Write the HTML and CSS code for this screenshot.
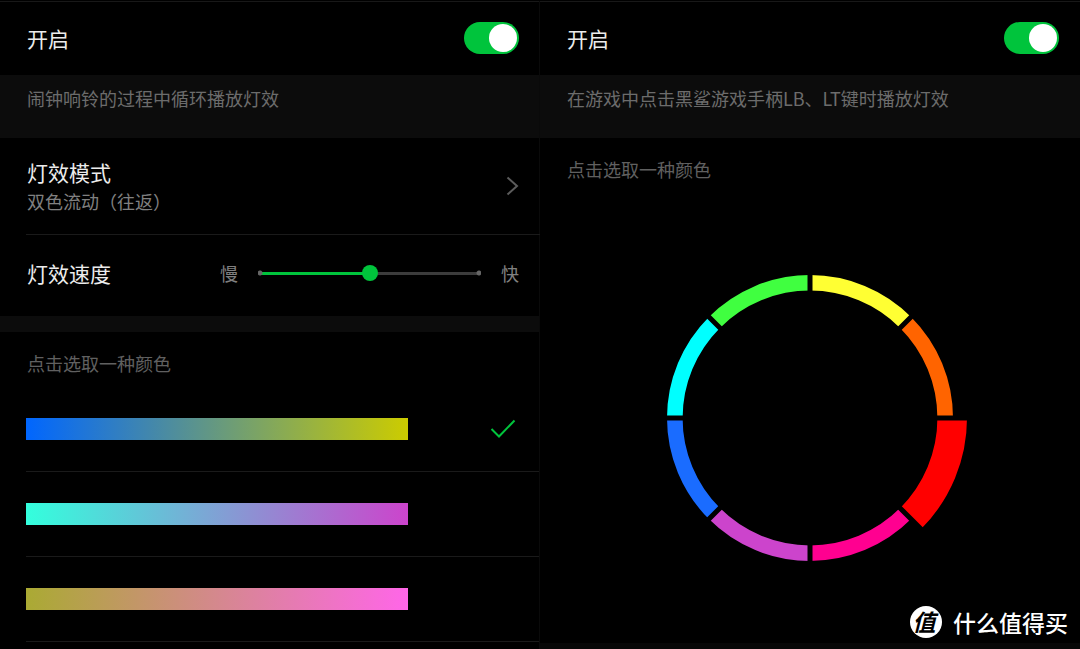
FILE: index.html
```html
<!DOCTYPE html>
<html lang="zh-CN">
<head>
<meta charset="utf-8">
<meta name="viewport" content="width=device-width, initial-scale=1">
<title>灯效设置</title>
<link rel="stylesheet" href="styles.css">
</head>
<body>
<main class="panes">
  <section class="pane">
    <label class="row power">
      <span class="title">开启</span>
      <input class="switch" type="checkbox" role="switch" checked>
    </label>
    <p class="note">闹钟响铃的过程中循环播放灯效</p>
    <button class="row mode" type="button">
      <span class="mode-text">
        <span class="title">灯效模式</span>
        <span class="sub">双色流动（往返）</span>
      </span>
      <svg class="chevron" viewBox="0 0 13 20" aria-hidden="true"><path d="M1.5 1.5 L11 10 L1.5 18.5"/></svg>
    </button>
    <div class="row speed">
      <label class="title speed-label" for="speed">灯效速度</label>
      <span class="end">慢</span>
      <input class="slider" id="speed" type="range" min="0" max="100" value="50">
      <span class="end">快</span>
    </div>
    <fieldset class="colors">
      <legend class="hint">点击选取一种颜色</legend>
      <label class="color">
        <input class="pick" type="radio" name="color" aria-label="蓝黄" checked>
        <span class="swatch blue-yellow"></span>
        <svg class="check" viewBox="0 0 26 20" aria-hidden="true"><path d="M1.5 10 L9 17.5 L24.5 1.5"/></svg>
      </label>
      <label class="color">
        <input class="pick" type="radio" name="color" aria-label="青紫">
        <span class="swatch cyan-purple"></span>
        <svg class="check" viewBox="0 0 26 20" aria-hidden="true"><path d="M1.5 10 L9 17.5 L24.5 1.5"/></svg>
      </label>
      <label class="color">
        <input class="pick" type="radio" name="color" aria-label="橄榄粉">
        <span class="swatch olive-pink"></span>
        <svg class="check" viewBox="0 0 26 20" aria-hidden="true"><path d="M1.5 10 L9 17.5 L24.5 1.5"/></svg>
      </label>
    </fieldset>
  </section>

  <section class="pane">
    <label class="row power">
      <span class="title">开启</span>
      <input class="switch" type="checkbox" role="switch" checked>
    </label>
    <p class="note">在游戏中点击黑鲨游戏手柄LB、LT键时播放灯效</p>
    <p class="hint wheel-hint">点击选取一种颜色</p>
    <svg class="wheel" viewBox="-160 -160 320 320" role="img" aria-label="颜色环">
      <g class="segments">
        <path stroke="#ffff33" d="M0 -135.2 A135.2 135.2 0 0 1 95.6 -95.6"/>
        <path stroke="#ff6400" d="M95.6 -95.6 A135.2 135.2 0 0 1 135.2 0"/>
        <path stroke="#ff0090" d="M95.6 95.6 A135.2 135.2 0 0 1 0 135.2"/>
        <path stroke="#cc44cc" d="M0 135.2 A135.2 135.2 0 0 1 -95.6 95.6"/>
        <path stroke="#1a6cff" d="M-95.6 95.6 A135.2 135.2 0 0 1 -135.2 0"/>
        <path stroke="#00ffff" d="M-135.2 0 A135.2 135.2 0 0 1 -95.6 -95.6"/>
        <path stroke="#40ff40" d="M-95.6 -95.6 A135.2 135.2 0 0 1 0 -135.2"/>
        <path class="selected" stroke="#ff0000" d="M142.2 0 A142.2 142.2 0 0 1 100.6 100.6"/>
      </g>
      <path class="gaps" d="M0 -159 V159 M-159 0 H159 M-113 -113 L113 113 M-113 113 L113 -113"/>
    </svg>
  </section>
</main>
<div class="brand">
  <span class="brand-mark">值</span>
  <span class="brand-name">什么值得买</span>
</div>
</body>
</html>
```
FILE: styles.css
```css
* { box-sizing: border-box; }

body {
  margin: 0;
  min-height: 100vh;
  position: relative;
  overflow: hidden;
  background: #000;
  color: #ececec;
  font-family: "Noto Sans CJK SC", sans-serif;
  font-size: 18px;
  line-height: 28px;
}

.panes {
  display: grid;
  grid-template-columns: 1fr 1fr;
  min-height: 100vh;
}

.pane {
  min-width: 0;
  border-top: 1px solid #181818;
  margin-top: 1px;
}

.pane + .pane {
  border-bottom: 6px solid #070707;
  box-shadow: -1px 0 #0a0a0a;
}

.row {
  display: flex;
  align-items: center;
  padding: 0 21px 0 27px;
}

.title {
  font-size: 21px;
  line-height: 30px;
  color: #ececec;
}

.power {
  justify-content: space-between;
  height: 73px;
  padding-bottom: 2px;
}

.switch {
  appearance: none;
  display: flex;
  align-items: center;
  justify-content: flex-end;
  width: 55px;
  height: 32px;
  margin: 0;
  padding: 2px;
  border-radius: 16px;
  background: #333;
}

.switch::before {
  content: "";
  width: 28px;
  height: 28px;
  border-radius: 50%;
  background: #fff;
}

.switch:checked { background: #00c43c; }

.note {
  margin: 0;
  padding: 9px 27px 26px;
  background: #0c0c0c;
  color: #6c6c6c;
}

.mode {
  justify-content: space-between;
  width: 100%;
  height: 96px;
  border: 0;
  background: none;
  font: inherit;
  text-align: left;
}

.mode-text {
  display: flex;
  flex-direction: column;
}

.sub { color: #808080; }

.chevron {
  width: 13px;
  height: 20px;
  fill: none;
  stroke: #5c5c5c;
  stroke-width: 2;
}

.speed {
  position: relative;
  height: 82px;
  padding-bottom: 4px;
}

.speed::before {
  content: "";
  position: absolute;
  top: 0;
  left: 26px;
  right: 0;
  height: 1px;
  background: #1a1a1a;
}

.speed-label { flex: 0 0 193px; }

.end { color: #808080; }

.slider {
  appearance: none;
  flex: 1;
  min-width: 0;
  height: 16px;
  margin: 0 20px;
  background:
    radial-gradient(circle at 2px 8px, #666 2px, transparent 3px),
    radial-gradient(circle at calc(100% - 2px) 8px, #666 2px, transparent 3px),
    linear-gradient(90deg, #00c43c 50%, #3c3c3c 50%) center / calc(100% - 4px) 3px no-repeat;
}

.slider::-webkit-slider-thumb {
  appearance: none;
  width: 16px;
  height: 16px;
  border-radius: 50%;
  background: #00c43c;
}

.colors {
  margin: 0;
  padding: 0;
  border: 0;
  border-top: 16px solid #0c0c0c;
}

.hint {
  color: #606060;
}

.colors .hint {
  float: left;
  width: 100%;
  padding: 17px 27px 10px;
}

.color {
  clear: both;
  display: flex;
  align-items: center;
  height: 85px;
  margin-left: 26px;
  padding-right: 24px;
  border-bottom: 1px solid #1a1a1a;
}

.pick {
  appearance: none;
  width: 0;
  height: 0;
  margin: 0;
}

.swatch {
  flex: 0 0 78%;
  height: 22px;
}

.blue-yellow { background: linear-gradient(90deg, #0066ff, #cccc00); }
.cyan-purple { background: linear-gradient(90deg, #33ffdd, #cc44cc); }
.olive-pink { background: linear-gradient(90deg, #aaaa33, #ff66e8); }

.check {
  visibility: hidden;
  width: 26px;
  height: 20px;
  margin-left: auto;
  fill: none;
  stroke: #00c43c;
  stroke-width: 2;
}

.pick:checked ~ .check { visibility: visible; }

.wheel-hint {
  margin: 0;
  padding: 17px 27px 19px;
}

.wheel {
  display: block;
  width: 320px;
  height: 320px;
  margin: 56px auto 0;
}

.segments {
  fill: none;
  stroke-width: 15.6;
}

.selected { stroke-width: 29.6; }

.gaps {
  fill: none;
  stroke: #000;
  stroke-width: 5;
}

.brand {
  position: absolute;
  right: 12px;
  bottom: 11px;
  display: flex;
  align-items: center;
  gap: 11px;
  color: #fff;
}

.brand-mark {
  width: 32px;
  height: 32px;
  padding-right: 4px;
  border-radius: 50%;
  background: #fff;
  color: #000;
  font-size: 23px;
  font-style: italic;
  font-weight: 700;
  line-height: 31px;
  text-align: center;
}

.brand-name {
  font-size: 23px;
  font-weight: 500;
  line-height: 32px;
}
```
